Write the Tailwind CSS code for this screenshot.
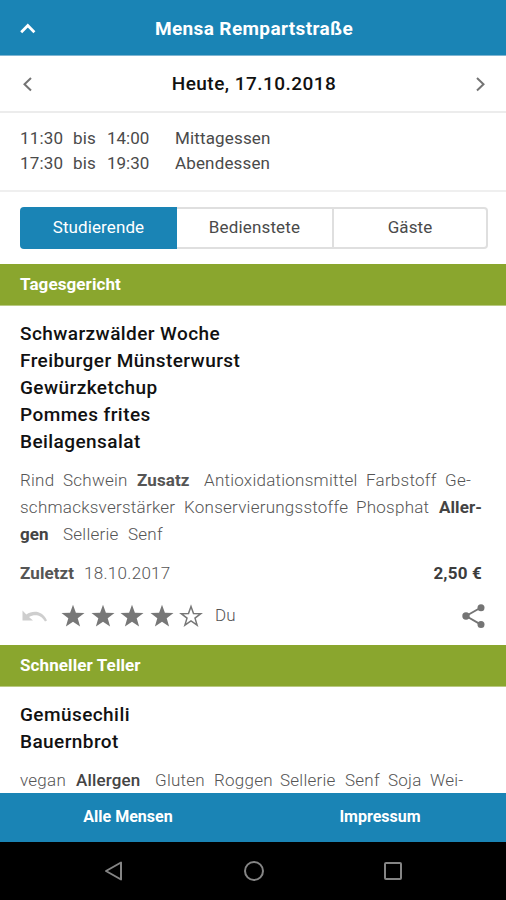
<!DOCTYPE html>
<html lang="de">
<head>
<meta charset="utf-8">
<title>Mensa Rempartstraße</title>
<script src="https://cdn.jsdelivr.net/npm/@tailwindcss/browser@4"></script>
</head>
<body class="w-[506px] h-[900px] overflow-hidden bg-white font-['Roboto',sans-serif] whitespace-nowrap flex flex-col">
  <header class="h-14 shrink-0 bg-[#1a84b5] border-b border-[#7fb5d2] flex items-center px-5 text-white">
    <svg class="w-4 h-4 mt-0.5" viewBox="0 0 16 16" fill="none" stroke="currentColor" stroke-width="2.8"><path d="M1.2 11.2 7.800 4.600l6.600 6.600"/></svg>
    <h1 class="flex-1 text-center pr-3.5 pt-0.5 text-[19px] font-bold tracking-[0.37px] leading-6">Mensa Rempartstraße</h1>
  </header>
  <div class="h-[57px] shrink-0 border-b-2 border-[#ececec] flex items-center justify-between pl-[22px] pr-[21px]">
    <svg class="w-3 h-4" viewBox="0 0 12 16" fill="none" stroke="#747474" stroke-width="2"><path d="M9 2 2.5 8.2 9 14.5"/></svg>
    <h2 class="text-[19px] font-medium tracking-[0.46px] leading-6 text-[#111] pl-px">Heute, 17.10.2018</h2>
    <svg class="w-3 h-4" viewBox="0 0 12 16" fill="none" stroke="#747474" stroke-width="2"><path d="M4 2l6.5 6.2L4 14.5"/></svg>
  </div>
  <div class="h-[79px] shrink-0 border-b-2 border-[#efefef] px-5 pt-[13px] text-[17px] leading-[25px] tracking-[0.15px] text-[#4a4a4a]">
    <div class="flex"><span class="w-[53px]">11:30</span><span class="w-[34px]">bis</span><span class="w-[68px] tracking-[0px]">14:00</span><span>Mittagessen</span></div>
    <div class="flex"><span class="w-[53px]">17:30</span><span class="w-[34px]">bis</span><span class="w-[68px] tracking-[0px]">19:30</span><span>Abendessen</span></div>
  </div>
  <div class="h-18 shrink-0 px-5 pt-[15px]">
    <div class="h-[42px] w-[468px] flex text-[17px] text-[#4a4a4a] tracking-[0.1px]">
      <div class="w-[157px] rounded-l-[4px] bg-[#1a84b5] text-white flex items-center justify-center">Studierende</div>
      <div class="w-[157px] border-y-2 border-r-2 border-[#dfdfdf] flex items-center justify-center tracking-[0.15px]">Bedienstete</div>
      <div class="flex-1 rounded-r-[4px] border-2 border-l-0 border-[#dfdfdf] flex items-center justify-center tracking-[0.1px]">Gäste</div>
    </div>
  </div>
  <div class="h-[42px] shrink-0 bg-[#8aa62e] border-b border-[#b9c982] flex items-center px-5 text-white font-bold text-[17px] tracking-[0.1px]">Tagesgericht</div>
  <section class="h-[339px] shrink-0 px-5 pt-[14px] text-[#727272]">
    <div class="text-[19px] leading-[27px] font-medium tracking-[0.43px] text-[#111]">
      <div>Schwarzwälder Woche</div>
      <div>Freiburger Münsterwurst</div>
      <div>Gewürzketchup</div>
      <div>Pommes frites</div>
      <div>Beilagensalat</div>
    </div>
    <div class="mt-3 text-[17px] leading-[27px] font-light tracking-[0.25px] text-[#555]">
      <div class="flex"><span class="w-[43px]">Rind</span><span class="w-[74px]">Schwein</span><b class="w-[67px] font-bold tracking-[0.1px]">Zusatz</b><span class="w-[162px]">Antioxidationsmittel</span><span class="w-[79px]">Farbstoff</span><span>Ge-</span></div>
      <div class="flex"><span class="w-[164px]">schmacksverstärker</span><span class="w-[172px]">Konservierungsstoffe</span><span class="w-[83px]">Phosphat</span><b class="font-bold text-[#444] tracking-[0.1px]">Aller-</b></div>
      <div class="flex"><b class="w-[43px] font-bold text-[#444] tracking-[0.1px]">gen</b><span class="w-[65px]">Sellerie</span><span>Senf</span></div>
    </div>
    <div class="mt-3 flex text-[17px] leading-[27px] text-[#555]">
      <b class="w-[64px] font-bold tracking-[0.1px]">Zuletzt</b><span class="font-light tracking-[0.3px]">18.10.2017</span>
      <b class="ml-auto mr-1 font-bold text-[#3c3c3c] tracking-[0.2px]">2,50 €</b>
    </div>
    <div class="mt-3 h-[34px] flex items-center">
      <svg class="w-7 h-4 mr-[13px]" viewBox="0 0 28 16"><path d="M2.500 2.5V12.500H13L9 9C14.500 6 21 6.500 25 13.500L27 12.500C22.500 2.500 13 2 6.300 6.500Z" fill="#cecece"/></svg>
      <div class="flex gap-[5.500px]">
        <svg class="w-6 h-6" viewBox="0 0 24 24" fill="#777"><path d="M12 .8l2.900 7.900 8.600.3-6.800 5.200 2.400 8.300L12 17.700l-7.100 4.800 2.400-8.300L.5 9l8.600-.3z"/></svg>
        <svg class="w-6 h-6" viewBox="0 0 24 24" fill="#777"><path d="M12 .8l2.900 7.900 8.600.3-6.800 5.200 2.400 8.300L12 17.700l-7.100 4.800 2.400-8.300L.5 9l8.600-.3z"/></svg>
        <svg class="w-6 h-6" viewBox="0 0 24 24" fill="#777"><path d="M12 .8l2.900 7.900 8.600.3-6.800 5.200 2.400 8.300L12 17.700l-7.100 4.800 2.400-8.300L.5 9l8.600-.3z"/></svg>
        <svg class="w-6 h-6" viewBox="0 0 24 24" fill="#777"><path d="M12 .8l2.900 7.900 8.600.3-6.800 5.200 2.400 8.300L12 17.700l-7.100 4.800 2.400-8.300L.5 9l8.600-.3z"/></svg>
        <svg class="w-6 h-6" viewBox="0 0 24 24" fill="none" stroke="#777" stroke-width="1.500"><path d="M12 2.500l2.500 6.900 7.300.3-5.800 4.400 2.100 7-6.100-4.200-6.100 4.200 2.100-7-5.800-4.400 7.300-.3z"/></svg>
      </div>
      <span class="ml-[12px] text-[17px] font-light text-[#555]">Du</span>
      <svg class="ml-auto w-6 h-6" viewBox="0 0 24 24" fill="#747474"><path d="M4 12 19 3.500M4 12l15 8.700" stroke="#747474" stroke-width="2"/><circle cx="4" cy="12" r="3.700"/><circle cx="19" cy="3.700" r="3.500"/><circle cx="19" cy="20.400" r="3.500"/></svg>
    </div>
  </section>
  <div class="h-[42px] shrink-0 bg-[#8aa62e] border-b border-[#b9c982] flex items-center px-5 text-white font-bold text-[17px] tracking-[0.1px]">Schneller Teller</div>
  <section class="h-[106px] shrink-0 overflow-hidden px-5 pt-[14px]">
    <div class="text-[19px] leading-[27px] font-medium tracking-[0.43px] text-[#111]">
      <div>Gemüsechili</div>
      <div>Bauernbrot</div>
    </div>
    <div class="mt-3 text-[17px] leading-[27px] font-light tracking-[0.25px] text-[#555]">
      <div class="flex"><span class="w-[56px]">vegan</span><b class="w-[79px] font-medium text-[#444] tracking-[0.15px]">Allergen</b><span class="w-[59px]">Gluten</span><span class="w-[66px]">Roggen</span><span class="w-[65px]">Sellerie</span><span class="w-[43px]">Senf</span><span class="w-[42px]">Soja</span><span>Wei-</span></div>
    </div>
  </section>
  <footer class="h-[49px] shrink-0 bg-[#1a84b5] grid grid-cols-2 pl-0.5 text-center text-white font-bold text-[16px] leading-[47px]">
    <div>Alle Mensen</div>
    <div>Impressum</div>
  </footer>
  <nav class="flex-1 bg-black flex items-center justify-between pl-[104px] pr-[103px]">
    <svg class="w-5 h-5" viewBox="0 0 20 20" fill="none" stroke="#858585" stroke-width="2" stroke-linejoin="round"><path d="M2 10 17 1.500v17z"/></svg>
    <svg class="w-5 h-5" viewBox="0 0 20 20" fill="none" stroke="#858585" stroke-width="2"><circle cx="10" cy="10" r="9"/></svg>
    <svg class="w-5 h-5" viewBox="0 0 20 20" fill="none" stroke="#858585" stroke-width="2"><rect x="2" y="2" width="16" height="16" rx="1"/></svg>
  </nav>
</body>
</html>
